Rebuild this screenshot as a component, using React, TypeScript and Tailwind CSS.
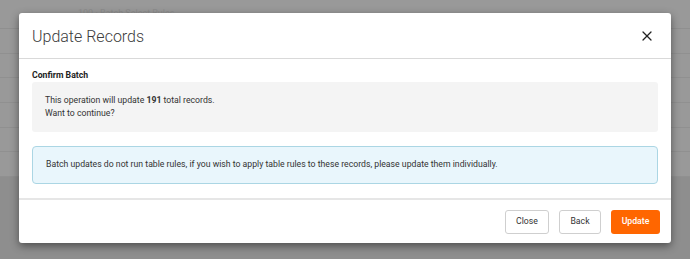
import { X } from 'lucide-react';

const rows = [0, 1, 2, 3, 4, 5];

export default function App() {
  return (
    <div className="relative h-[259px] w-[690px] overflow-hidden bg-[#8e8e8e] font-['Roboto','Liberation_Sans',sans-serif]">
      {/* page behind the dialog */}
      <div className="flex flex-col bg-[#999999]">
        <div className="h-[29px] border-b border-[#8f8f8f] pl-[78px] pt-[7px] text-[9px] text-[#8c8c8c]">
          100 · Batch Select Rules
        </div>
        {rows.map((r) => (
          <div key={r} className="h-[24.7px] border-b border-[#909090]" />
        ))}
      </div>

      {/* dialog */}
      <div className="absolute left-[19px] top-[13px] flex h-[230px] w-[652px] flex-col rounded-[3px] bg-white shadow-[0_3px_8px_rgba(0,0,0,0.45)]">
        <div className="flex h-[46px] items-center justify-between border-b border-[#d9d9d9] pl-[13px] pr-[16px]">
          <h2 className="pt-[2px] text-[16px] font-light text-[#3c3c3c]">Update Records</h2>
          <button type="button" aria-label="Close" className="text-[#222]">
            <X className="h-[16px] w-[16px]" strokeWidth={1.9} />
          </button>
        </div>

        <div className="flex flex-1 flex-col px-[13px] pt-[10px]">
          <div className="text-[8.7px] font-bold leading-[12px] text-[#222]">Confirm Batch</div>
          <div className="mt-[1px] flex h-[50px] flex-col justify-center rounded-[3px] bg-[#f4f4f4] px-[13px] text-[8.7px] leading-[13px] text-[#333]">
            <p>
              This operation will update <span className="font-bold">191</span> total records.
            </p>
            <p>Want to continue?</p>
          </div>
          <div className="mt-[14px] flex h-[38px] items-center rounded-[4px] border border-[#abd6e4] bg-[#e9f6fc] px-[13px] text-[8.7px] text-[#333]">
            Batch updates do not run table rules, if you wish to apply table rules to these records, please update them individually.
          </div>
        </div>

        <div className="flex h-[45px] items-center justify-end gap-[10px] border-t-2 border-[#e6e6e6] pr-[11px]">
          <button
            type="button"
            className="h-[24px] w-[44px] rounded-[3px] border border-[#cfcfcf] bg-white text-[8.7px] text-[#333]"
          >
            Close
          </button>
          <button
            type="button"
            className="h-[24px] w-[42px] rounded-[3px] border border-[#cfcfcf] bg-white text-[8.7px] text-[#333]"
          >
            Back
          </button>
          <button
            type="button"
            className="h-[24px] w-[49px] rounded-[3px] bg-[#ff6600] text-[8.7px] font-medium text-white"
          >
            Update
          </button>
        </div>
      </div>
    </div>
  );
}
